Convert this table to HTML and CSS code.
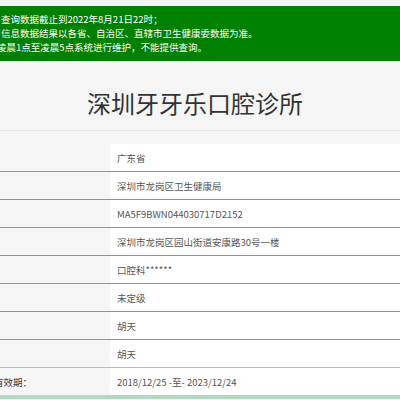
FILE: index.html
```html
<!DOCTYPE html>
<html lang="zh-CN">
<head>
<meta charset="utf-8">
<link rel="stylesheet" href="styles.css">
</head>
<body>
<div class="notice">
  <p class="line">查询数据截止到2022年8月21日22时；</p>
  <p class="line">信息数据结果以各省、自治区、直辖市卫生健康委数据为准。</p>
  <p class="line cut">凌晨1点至凌晨5点系统进行维护，不能提供查询。</p>
</div>
<div class="title-wrap">
  <h1 class="title">深圳牙牙乐口腔诊所</h1>
</div>
<div class="info">
  <div class="row"><div class="label"></div><div class="value">广东省</div></div>
  <div class="row"><div class="label"></div><div class="value">深圳市龙岗区卫生健康局</div></div>
  <div class="row"><div class="label"></div><div class="value">MA5F9BWN044030717D2152</div></div>
  <div class="row"><div class="label"></div><div class="value">深圳市龙岗区园山街道安康路30号一楼</div></div>
  <div class="row"><div class="label"></div><div class="value">口腔科******</div></div>
  <div class="row"><div class="label"></div><div class="value">未定级</div></div>
  <div class="row"><div class="label"></div><div class="value">胡天</div></div>
  <div class="row pre-last"><div class="label"></div><div class="value">胡天</div></div>
  <div class="row last"><div class="label"><span class="label-text">有效期：</span></div><div class="value">2018/12/25 -至- 2023/12/24</div></div>
</div>
</body>
</html>
```
FILE: styles.css
```css
html, body {
  margin: 0;
  padding: 0;
}
body {
  background: #f5f5f5;
  font-family: "Noto Sans CJK SC", "Noto Sans", sans-serif;
  overflow: hidden;
}
.notice {
  margin-top: 6px;
  background: #008000;
  color: #ffffff;
  padding: 6px 0 7px 1px;
  font-size: 9.5px;
  line-height: 14px;
}
.line {
  margin: 0;
  white-space: nowrap;
}
.cut {
  margin-left: -4px;
}
.title-wrap {
  padding: 27px 0 12px;
  border-bottom: 1px solid #e8e8e8;
  text-align: center;
}
.title {
  margin: 0 0 0 -10px;
  font-weight: normal;
  font-size: 24px;
  line-height: 30px;
  color: #333333;
}
.info {
  margin-top: 13px;
}
.row {
  display: grid;
  grid-template-columns: 110px 1fr;
  height: 27px;
  border-bottom: 1px solid #6aaa84;
  font-size: 9.5px;
}
.row.pre-last {
  border-bottom: 1px solid #9ccbaf;
}
.row.last {
  border-bottom: 4px solid #b3d9c1;
}
.label {
  background: #f5f5f5;
  display: flex;
  align-items: center;
  color: #333333;
  overflow: visible;
}
.label-text {
  margin-left: -6px;
  white-space: nowrap;
}
.value {
  background: #ffffff;
  display: flex;
  align-items: center;
  padding-left: 7px;
  color: #555555;
  white-space: nowrap;
}
```
